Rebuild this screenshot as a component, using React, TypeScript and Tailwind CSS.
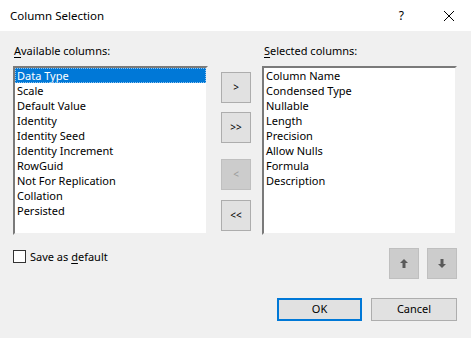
import React from "react";

const available = [
  "Data Type",
  "Scale",
  "Default Value",
  "Identity",
  "Identity Seed",
  "Identity Increment",
  "RowGuid",
  "Not For Replication",
  "Collation",
  "Persisted",
];

const selected = [
  "Column Name",
  "Condensed Type",
  "Nullable",
  "Length",
  "Precision",
  "Allow Nulls",
  "Formula",
  "Description",
];

function ListBox({ items, active }: { items: string[]; active?: number }) {
  return (
    <div className="h-[169px] w-[195px] bg-white border-2 border-t-[#7a7a7a] border-l-[#7a7a7a] border-b-[#f0f0f0] border-r-[#f0f0f0] overflow-hidden">
      {items.map((item, i) => (
        <div
          key={item}
          className={
            i === active
              ? "h-[15px] leading-[15px] pl-[2px] bg-[#0078d7] text-white outline-1 outline-dotted outline-[#8fc3ee] -outline-offset-1"
              : "h-[15px] leading-[15px] pl-[2px] text-black"
          }
        >
          {item}
        </div>
      ))}
    </div>
  );
}

function MoveButton({ label, disabled }: { label: string; disabled?: boolean }) {
  return (
    <button
      className={
        disabled
          ? "h-[31px] w-[30px] border border-[#bfbfbf] bg-[#cccccc] text-[#9a9a9a] text-[10px]"
          : "h-[31px] w-[30px] border border-[#adadad] bg-[#e1e1e1] text-black text-[10px]"
      }
    >
      {label}
    </button>
  );
}

function ArrowButton({ down }: { down?: boolean }) {
  return (
    <button className="h-[31px] w-[30px] border border-[#bfbfbf] bg-[#cccccc] flex items-center justify-center">
      <svg width="8" height="9" viewBox="0 0 8 9" className={down ? "rotate-180" : ""}>
        <path d="M4 0 L8 4 L5.5 4 L5.5 9 L2.5 9 L2.5 4 L0 4 Z" fill="#5a5a5a" />
      </svg>
    </button>
  );
}

export default function App() {
  return (
    <div className="w-[471px] h-[338px] bg-[#f0f0f0] text-[11px] text-black font-['Noto_Sans',sans-serif] overflow-hidden">
      <div className="h-[31px] bg-white flex items-center pl-[10px] pr-[17px]">
        <span className="flex-1 text-[11.5px]">Column Selection</span>
        <span className="mr-[40px] text-[12px]">?</span>
        <svg width="10" height="10" viewBox="0 0 10 10">
          <path d="M0 0 L10 10 M10 0 L0 10" stroke="#000" strokeWidth="1" />
        </svg>
      </div>

      <div className="px-[13px] pt-[12px]">
        <div className="flex">
          <div>
            <div className="h-[16px] leading-[16px] pl-[1px]">
              <u className="underline-offset-2">A</u>vailable columns:
            </div>
            <div className="mt-[7px]">
              <ListBox items={available} active={0} />
            </div>
          </div>

          <div className="ml-[13px] pt-[29px] flex flex-col">
            <MoveButton label=">" />
            <div className="mt-[9px]">
              <MoveButton label=">>" />
            </div>
            <div className="mt-[16px]">
              <MoveButton label="<" disabled />
            </div>
            <div className="mt-[10px]">
              <MoveButton label="<<" />
            </div>
          </div>

          <div className="ml-[11px]">
            <div className="h-[16px] leading-[16px] pl-[2px]">
              <u className="underline-offset-2">S</u>elected columns:
            </div>
            <div className="mt-[7px]">
              <ListBox items={selected} />
            </div>
          </div>
        </div>

        <div className="mt-[13px] flex items-start">
          <label className="flex items-center mt-[2px] flex-1">
            <span className="w-[13px] h-[13px] border border-[#333] bg-white" />
            <span className="ml-[4px] leading-[13px]">
              Save as <u className="underline-offset-2">d</u>efault
            </span>
          </label>
          <div className="flex gap-[8px] mr-[1px]">
            <ArrowButton />
            <ArrowButton down />
          </div>
        </div>

        <div className="mt-[19px] flex justify-end gap-[9px] pr-[1px]">
          <button className="h-[23px] w-[85px] border-2 border-[#0078d7] bg-[#e1e1e1]">OK</button>
          <button className="h-[23px] w-[86px] border border-[#adadad] bg-[#e1e1e1]">Cancel</button>
        </div>
      </div>
    </div>
  );
}
